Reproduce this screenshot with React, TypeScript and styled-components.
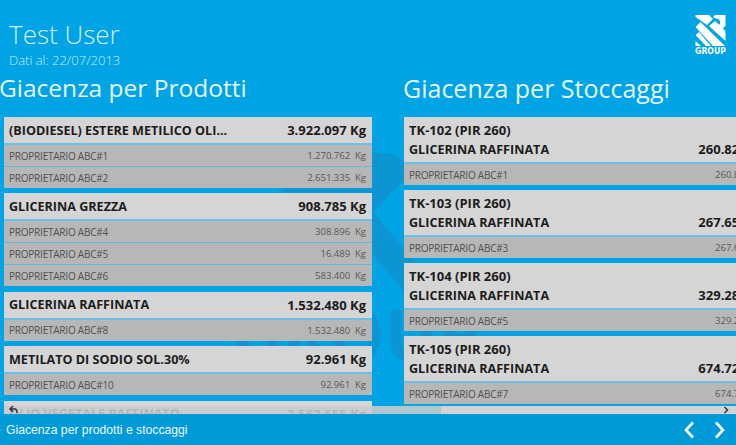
import React from "react";
import styled, { createGlobalStyle } from "styled-components";

const Global = createGlobalStyle`
  html, body { margin: 0; padding: 0; width: 736px; height: 445px; overflow: hidden; background: #00a3e3; }
  #root { width: 736px; height: 445px; }
`;

const Page = styled.div`
  position: relative;
  width: 736px;
  height: 445px;
  overflow: hidden;
  display: flex;
  flex-direction: column;
  background: #00a3e3;
  font-family: "Open Sans", "Noto Sans", sans-serif;
`;

const Watermark = styled.svg`
  position: absolute;
  left: 0;
  top: 0;
  width: 736px;
  height: 445px;
  fill: #0b95d2;
`;

const WatermarkText = styled.text`
  font: 700 70px "Open Sans", sans-serif;
`;

const Main = styled.div`
  position: relative;
  flex: 1;
  min-height: 0;
  overflow: hidden;
`;

const Header = styled.header`
  height: 73px;
  padding: 16px 0 0 9px;
  box-sizing: border-box;
  display: flex;
  justify-content: space-between;
  align-items: flex-start;
`;

const UserBlock = styled.div`
  display: flex;
  flex-direction: column;
`;

const UserName = styled.div`
  color: #d6f0fb;
  font-size: 26px;
  line-height: 37px;
  font-weight: 300;
`;

const DateLine = styled.div`
  color: #c4ecfb;
  font-size: 13px;
  line-height: 15px;
  font-weight: 300;
`;

const Logo = styled.svg`
  width: 31px;
  height: 39px;
  margin: -1px 10px 0 0;
  flex: none;
`;

const LogoWord = styled.text`
  font: 700 8.5px "DejaVu Sans", sans-serif;
`;

const Columns = styled.div`
  display: grid;
  grid-template-columns: 404px 332px;
`;

const Column = styled.section`
  min-width: 0;
  overflow: hidden;
`;

const ColumnTitle = styled.h2<{ $size: number }>`
  margin: 0 0 0 -1px;
  color: #e4f6fd;
  font-size: ${(p) => p.$size}px;
  line-height: 30px;
  height: 44px;
  font-weight: 400;
  white-space: nowrap;
`;

const LeftList = styled.div`
  width: 368px;
  margin-left: 4px;
  display: flex;
  flex-direction: column;
  gap: 5.4px;
`;

const RightList = styled.div`
  width: 368px;
  display: flex;
  flex-direction: column;
  gap: 5px;
`;

const Card = styled.article`
  display: flex;
  flex-direction: column;
`;

const CardHead = styled.div`
  height: 26px;
  padding: 0 6px 0 5px;
  display: flex;
  justify-content: space-between;
  align-items: center;
  background: #d5d5d5;
  border-bottom: 2px solid #6cc0e4;
  color: #1c1c1c;
  font-size: 12.6px;
  font-weight: 700;
  white-space: nowrap;
`;

const Qty = styled.span`
  font-size: 13px;
`;

const TankHead = styled.div`
  height: 47px;
  box-sizing: border-box;
  padding: 4px 6px 0 5px;
  background: #d5d5d5;
  border-bottom: 2px solid #6cc0e4;
  color: #1c1c1c;
  font-size: 12.6px;
  font-weight: 700;
  white-space: nowrap;
  display: flex;
  flex-direction: column;
`;

const TankName = styled.div`
  height: 18px;
  line-height: 18px;
  font-size: 13px;
`;

const TankLine = styled.div`
  height: 18px;
  line-height: 18px;
  margin-top: 1px;
  display: flex;
  justify-content: space-between;
  align-items: baseline;
`;

const SubRow = styled.div`
  height: 21px;
  padding: 0 6px 0 5px;
  display: flex;
  justify-content: space-between;
  align-items: center;
  background: #b7b7b7;
  color: #505050;
  font-size: 10px;
  letter-spacing: -0.22px;
  white-space: nowrap;
  & + & { border-top: 1px solid #6cb4d4; }
`;

const Amount = styled.span`
  color: #585858;
  white-space: pre;
  font-size: 9.6px;
  letter-spacing: -0.05px;
`;

const ScrollBar = styled.div`
  position: absolute;
  left: 4px;
  right: 0;
  top: 406px;
  height: 8px;
  display: flex;
`;

const Thumb = styled.div`
  position: relative;
  flex: none;
  width: 437px;
  height: 8px;
  background: rgba(203, 203, 203, 0.88);
`;

const Track = styled.div`
  position: relative;
  flex: 1;
  height: 8px;
  background: #d3d3d3;
`;

const ScrollBack = styled.svg`
  position: absolute;
  left: 4px;
  top: -1px;
  width: 10px;
  height: 9px;
  fill: none;
  stroke: #333;
  stroke-width: 1.5;
`;

const ScrollNext = styled.svg`
  position: absolute;
  right: 7px;
  top: 0;
  width: 6px;
  height: 8px;
  fill: none;
  stroke: #333;
  stroke-width: 1.5;
`;

const Footer = styled.footer`
  position: relative;
  height: 31px;
  flex: none;
  padding: 0 10px 0 6px;
  display: flex;
  justify-content: space-between;
  align-items: center;
  background: #009ad8;
  color: #eef9fe;
  font: 400 12.2px "Liberation Sans", Arial, sans-serif;
`;

const Nav = styled.div`
  display: flex;
  gap: 17px;
`;

const NavIcon = styled.svg`
  width: 13px;
  height: 18px;
  fill: none;
  stroke: #fff;
  stroke-width: 2.6;
`;

const products = [
  { name: "(BIODIESEL) ESTERE METILICO OLI...", qty: "3.922.097 Kg", rows: [["PROPRIETARIO ABC#1", "1.270.762"], ["PROPRIETARIO ABC#2", "2.651.335"]] },
  { name: "GLICERINA GREZZA", qty: "908.785 Kg", rows: [["PROPRIETARIO ABC#4", "308.896"], ["PROPRIETARIO ABC#5", "16.489"], ["PROPRIETARIO ABC#6", "583.400"]] },
  { name: "GLICERINA RAFFINATA", qty: "1.532.480 Kg", rows: [["PROPRIETARIO ABC#8", "1.532.480"]] },
  { name: "METILATO DI SODIO SOL.30%", qty: "92.961 Kg", rows: [["PROPRIETARIO ABC#10", "92.961"]] },
  { name: "OLIO VEGETALE RAFFINATO", qty: "3.567.655 Kg", rows: [] as string[][] },
];

const tanks = [
  { tank: "TK-102 (PIR 260)", qty: "260.820 Kg", owner: "PROPRIETARIO ABC#1", sub: "260.820" },
  { tank: "TK-103 (PIR 260)", qty: "267.650 Kg", owner: "PROPRIETARIO ABC#3", sub: "267.650" },
  { tank: "TK-104 (PIR 260)", qty: "329.280 Kg", owner: "PROPRIETARIO ABC#5", sub: "329.280" },
  { tank: "TK-105 (PIR 260)", qty: "674.720 Kg", owner: "PROPRIETARIO ABC#7", sub: "674.720" },
];

export default function App() {
  return (
    <Page>
      <Global />
      <Watermark viewBox="0 0 736 445">
        <path d="M280 215C272 170 340 153 385 153C395 153 402 158 404 164L412 171L373 212L345 240Z" />
        <path d="M373 212L420 268L420 311L378 260L340 214Z" />
        <WatermarkText x="232" y="360">GROUP</WatermarkText>
      </Watermark>
      <Main>
        <Header>
          <UserBlock>
            <UserName>Test User</UserName>
            <DateLine>Dati al: 22/07/2013</DateLine>
          </UserBlock>
          <Logo viewBox="0 0 31 39" fill="#fff">
            <path d="M0.5 0H14L18 4L12 10L0.5 2Z" />
            <path d="M20 0H30.5V11L27 14L24 10C26.5 7 24.5 3 20.5 3.5L18 2Z" />
            <path d="M0.5 12L5.5 7L30 31H18Z" />
            <path d="M0.5 20L4 17L16 31H11Z" />
            <path d="M0.5 26L6 31H0.5Z" />
            <path d="M14 11L20 6L30.5 16V26Z" />
            <LogoWord x="0" y="38.5" textLength="31" lengthAdjust="spacingAndGlyphs">GROUP</LogoWord>
          </Logo>
        </Header>
        <Columns>
          <Column>
            <ColumnTitle $size={24.5}>Giacenza per Prodotti</ColumnTitle>
            <LeftList>
              {products.map((p) => (
                <Card key={p.name}>
                  <CardHead><span>{p.name}</span><Qty>{p.qty}</Qty></CardHead>
                  {p.rows.map(([o, a]) => (
                    <SubRow key={o}><span>{o}</span><Amount>{a}  Kg</Amount></SubRow>
                  ))}
                </Card>
              ))}
            </LeftList>
          </Column>
          <Column>
            <ColumnTitle $size={25}>Giacenza per Stoccaggi</ColumnTitle>
            <RightList>
              {tanks.map((t) => (
                <Card key={t.tank}>
                  <TankHead>
                    <TankName>{t.tank}</TankName>
                    <TankLine><span>GLICERINA RAFFINATA</span><Qty>{t.qty}</Qty></TankLine>
                  </TankHead>
                  <SubRow><span>{t.owner}</span><Amount>{t.sub}  Kg</Amount></SubRow>
                </Card>
              ))}
            </RightList>
          </Column>
        </Columns>
        <ScrollBar>
          <Thumb>
            <ScrollBack viewBox="0 0 10 9"><path d="M5 1L2 4L5 7M2 4H7C9 4 9 6 9 8" /></ScrollBack>
          </Thumb>
          <Track>
            <ScrollNext viewBox="0 0 6 8"><path d="M1.5 1L4.5 4L1.5 7" /></ScrollNext>
          </Track>
        </ScrollBar>
      </Main>
      <Footer>
        <span>Giacenza per prodotti e stoccaggi</span>
        <Nav>
          <NavIcon viewBox="0 0 13 18"><path d="M10 1.5L3 9L10 16.5" /></NavIcon>
          <NavIcon viewBox="0 0 13 18"><path d="M3 1.5L10 9L3 16.5" /></NavIcon>
        </Nav>
      </Footer>
    </Page>
  );
}
